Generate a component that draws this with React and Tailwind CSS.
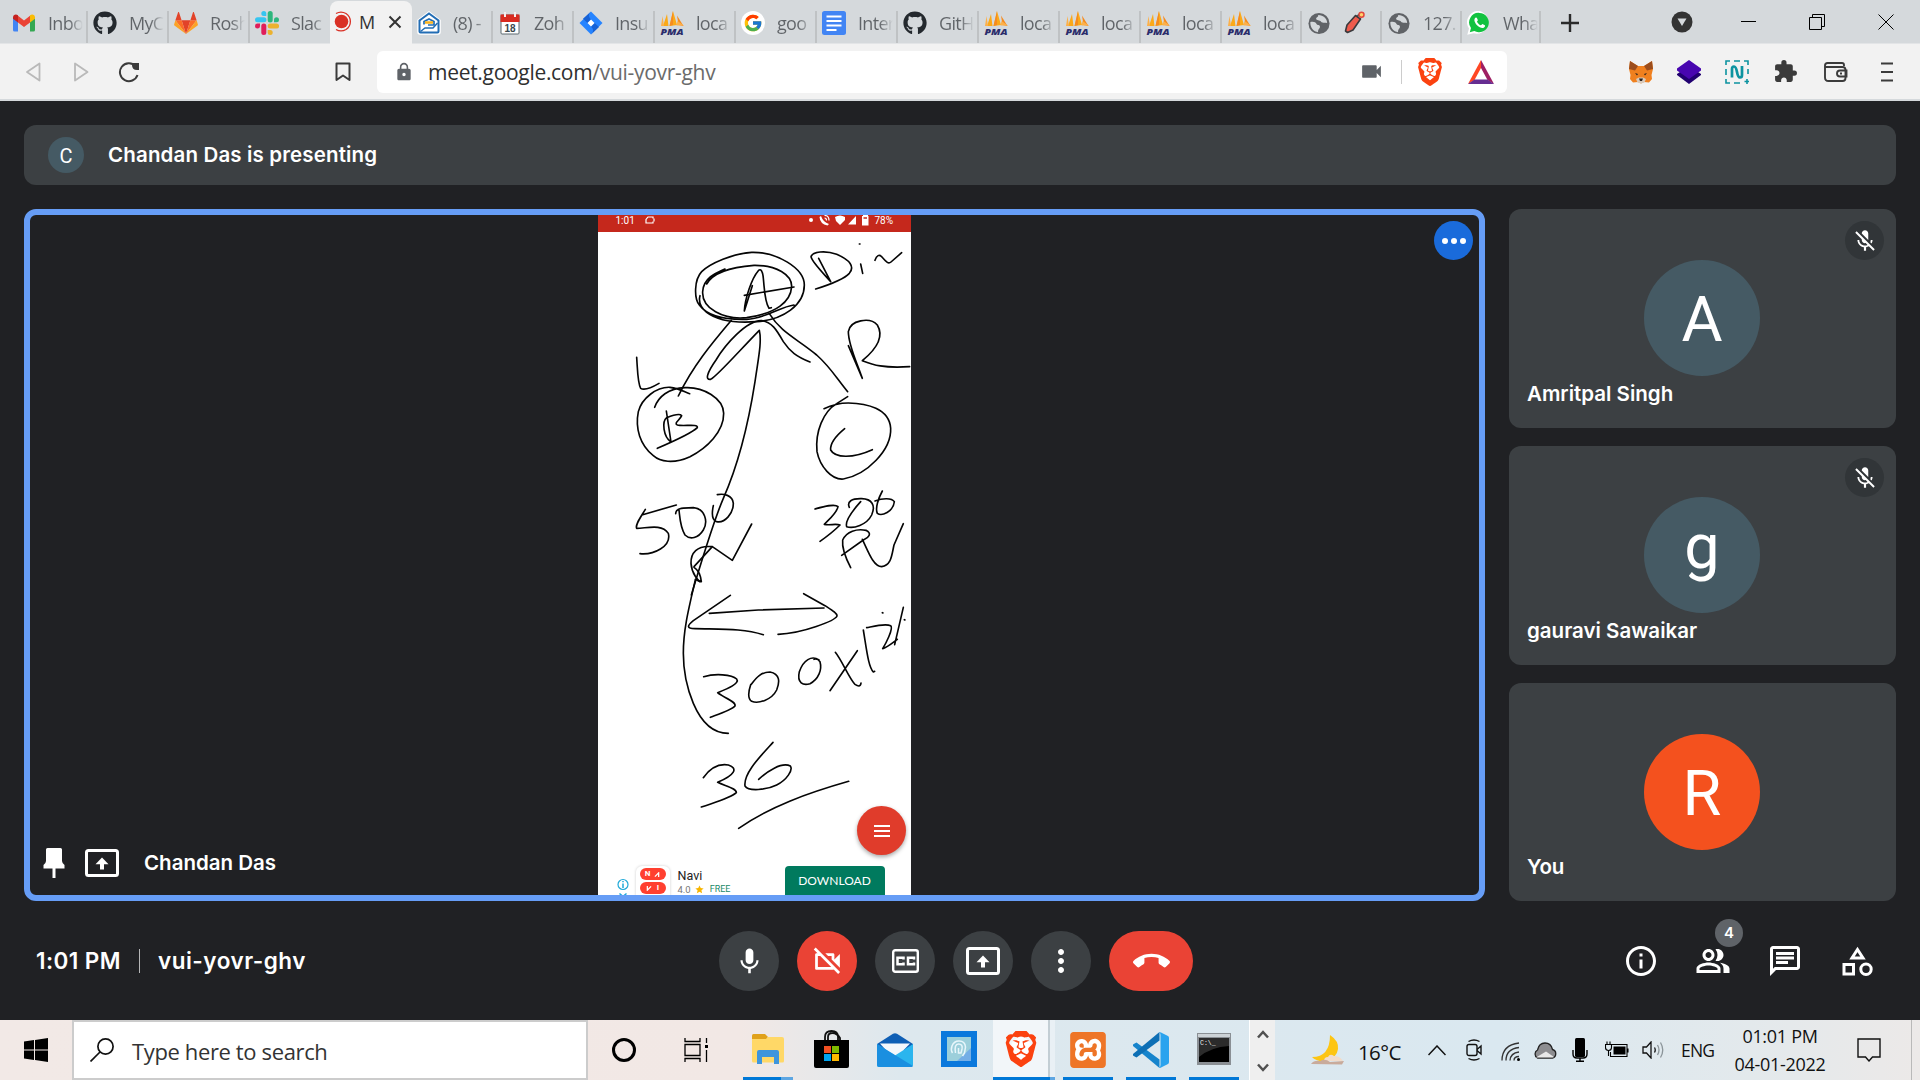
import React from "react";
import { FaGithub } from "react-icons/fa";
import { FcGoogle } from "react-icons/fc";
import { SiBrave, SiXampp } from "react-icons/si";
import {
  MdMic, MdMicOff, MdOutlineVideocamOff, MdMoreVert, MdCallEnd, MdInfoOutline,
  MdOutlinePeopleAlt, MdOutlineChat, MdVideocam, MdLock, MdExtension,
} from "react-icons/md";

/* ---------- favicons ---------- */
const Gmail = () => (
  <svg viewBox="0 0 24 24" className="h-6 w-6">
    <path d="M1 6v13q0 1.500 1.500 1.500H6V9.500z" fill="#4285f4" />
    <path d="M18 9.500v11h3.500Q23 20.500 23 19V6z" fill="#34a853" />
    <path d="M6 4.800v6.700l6 4.500 6-4.500V4.800L12 9.500z" fill="#ea4335" />
    <path d="M1 6.500c0-3 3-3.800 5-2.200v7.200l-5-3.700z" fill="#c5221f" />
    <path d="M23 6.500c0-3-3-3.800-5-2.200v7.200l5-3.700z" fill="#fbbc04" />
  </svg>
);
const Github = () => <FaGithub className="h-6 w-6 text-[#24292e]" />;
const Gitlab = () => (
  <svg viewBox="0 0 24 24" className="h-6 w-6">
    <path d="M12 23 16.400 9.300H7.600z" fill="#e24329" />
    <path d="M12 23 7.600 9.300H1.400z" fill="#fc6d26" />
    <path d="M1.400 9.300.1 13.400c-.1.400 0 .8.300 1L12 23z" fill="#fca326" />
    <path d="M1.400 9.300h6.200L5 1.200c-.1-.4-.7-.4-.9 0z" fill="#e24329" />
    <path d="M12 23 16.400 9.300h6.200z" fill="#fc6d26" />
    <path d="M22.600 9.300l1.300 4.100c.1.400 0 .8-.3 1L12 23z" fill="#fca326" />
    <path d="M22.600 9.300h-6.200L19 1.200c.1-.4.700-.4.9 0z" fill="#e24329" />
  </svg>
);
const Slack = () => (
  <svg viewBox="0 0 24 24" className="h-6 w-6">
    <g fill="#e01e5a"><path d="M5 15.200a2.500 2.500 0 1 1-2.500-2.600H5z" /><rect x="6.300" y="12.600" width="5" height="11.400" rx="2.500" /></g>
    <g fill="#36c5f0"><path d="M8.800 5a2.500 2.500 0 1 1 2.500-2.500V5z" /><rect x="0" y="6.300" width="11.400" height="5" rx="2.500" /></g>
    <g fill="#2eb67d"><path d="M19 8.800a2.500 2.500 0 1 1 2.500 2.500H19z" /><rect x="12.700" y="0" width="5" height="11.400" rx="2.500" /></g>
    <g fill="#ecb22e"><path d="M15.200 19a2.500 2.500 0 1 1-2.500 2.500V19z" /><rect x="12.700" y="12.600" width="11.400" height="5" rx="2.500" /></g>
  </svg>
);
const Recording = () => (
  <svg viewBox="0 0 18 24" className="h-6 w-[18px]">
    <circle cx="7.500" cy="11.500" r="6.800" fill="#d93025" />
    <path d="M2 3.500a10 10 0 0 1 10 0 9.500 9.500 0 0 1 0 16 10 10 0 0 1-10 0" fill="none" stroke="#d93025" strokeWidth="1.300" />
  </svg>
);
const ZohoMail = () => (
  <svg viewBox="0 0 24 24" className="h-6 w-6">
    <path d="M1.500 9.500 12 1.500l10.500 8V21a1.500 1.500 0 0 1-1.500 1.500H3A1.500 1.500 0 0 1 1.500 21z" fill="#fff" stroke="#fff" strokeWidth="2.500" />
    <path d="M2.500 9.500 12 2.500l9.500 7v11a1 1 0 0 1-1 1h-17a1 1 0 0 1-1-1z" fill="#fff" stroke="#226db4" strokeWidth="2" />
    <path d="m3.500 20.500 4.500-3.500h8l4.500-5" fill="none" stroke="#226db4" strokeWidth="1.500" />
    <path d="M7 13.500v-3L12 8l5 2.500v3.500h-6" fill="none" stroke="#226db4" strokeWidth="1.700" />
    <path d="M8 11.500h8" fill="none" stroke="#f9b21d" strokeWidth="2.500" />
  </svg>
);
const Calendar = () => (
  <svg viewBox="0 0 24 24" className="h-6 w-6">
    <rect x="3" y="4" width="18" height="19" rx="1" fill="#fff" stroke="#5d6b70" />
    <path d="M2.500 3.500h19V11h-19z" fill="#d92b20" />
    <path d="M7 1v5M17 1v5" stroke="#f6eeee" strokeWidth="2" />
    <text x="12" y="20.500" textAnchor="middle" fontSize="10" fontWeight="700" fontFamily="Liberation Sans" fill="#39474d">18</text>
  </svg>
);
const Jira = () => (
  <svg viewBox="0 0 24 24" className="h-6 w-6">
    <path d="M12 .5 23.500 12 12 23.500.5 12z" fill="#2684ff" />
    <path d="M12 .5q-4 4 0 8L8.500 12 4 7.800z" fill="#1662d6" />
    <path d="M12 23.500q4-4 0-8l3.500-3.500 4.500 4z" fill="#1662d6" />
    <path d="m12 8.500 3.500 3.500-3.500 3.500L8.500 12z" fill="#fff" />
  </svg>
);
const Pma = () => (
  <svg viewBox="0 0 24 24" className="h-6 w-6">
    <path d="M8.500 15 7 3 3 15zM9.500 15 13 0l4 14z" fill="#fba919" />
    <path d="M9.500 15 13 0v14z" fill="#f68b1f" />
    <path d="M17 4.500 23.500 15l-5-1z" fill="#f68b1f" />
    <path d="M2.500 5 1 15h3zM17.500 10l-1 4.500H24z" fill="#fcb04a" />
    <text x="12" y="23.500" textAnchor="middle" fontSize="9.300" fontWeight="800" fontStyle="italic" fontFamily="Open Sans" textLength="23" lengthAdjust="spacingAndGlyphs" fill="#2b2d6b">PMA</text>
  </svg>
);
const Google = () => (
  <span className="flex h-6 w-6 items-center justify-center rounded-full bg-white"><FcGoogle className="h-5 w-5" /></span>
);
const Docs = () => (
  <svg viewBox="0 0 24 24" className="h-6 w-6">
    <rect width="24" height="24" rx="2.500" fill="#4285f4" />
    <path d="M4.500 5.500h15M4.500 10h15M4.500 14.500h15M4.500 19h10" stroke="#fff" strokeWidth="2" />
  </svg>
);
const Globe = () => (
  <svg viewBox="0 0 24 24" className="h-[23px] w-6">
    <circle cx="12" cy="12" r="11" fill="#606367" />
    <path d="M3 10.500c3-1 5.500 0 6.500 2 .6 1.500 3.500.5 3.500 3 0 2-2 2-2 5.500C6.500 21 2.500 16 3 10.500zM11 3c1 2-2 2-2 4s4 1 5 3 4 1 6.500 1.500C20.500 7 17 3 11 3z" fill="#d5d9dc" />
  </svg>
);
const WhatsApp = () => (
  <svg viewBox="0 0 24 24" className="h-6 w-6">
    <path d="M12.500 0A11.300 11.300 0 0 0 2 17.500L.3 23.800l6.200-1.600A11.500 11.500 0 1 0 12.500 0z" fill="#fff" />
    <path d="M12.500 1.900A9.500 9.500 0 0 0 4 17l-1.200 4.300L7.300 20A9.700 9.700 0 1 0 12.500 1.900z" fill="#12c23f" />
    <path d="M8.800 6.500c-3 2-.5 6 1.500 8 2.500 2.500 6 3.500 7.500 1.200.8-1.500 0-1.700-2.300-2.700-.8 0-1 1.500-1.800 1.300-1.700-.6-3-2-3.700-3.500 0-.8 1-1 .8-1.800-.7-1.700-.8-2.700-2-2.500z" fill="#fff" />
  </svg>
);
const Extinguisher = () => (
  <svg viewBox="0 0 24 24" className="h-6 w-6">
    <path d="M4 14 12.500 4.500l5 3.500L10 19l-5.500 2.500L2.500 20z" fill="#ef5b4c" stroke="#3a3a3d" strokeWidth="1.600" strokeLinejoin="round" />
    <path d="m14.500 5 3-2.500" stroke="#3a3a3d" strokeWidth="1.800" />
    <circle cx="18.500" cy="3.700" r="2.500" fill="#ffd36b" stroke="#e2493d" strokeWidth="1.500" />
  </svg>
);

const tabs = [
  { w: "w-[81px]", icon: Gmail, label: "Inbo" },
  { w: "w-[81px]", icon: Github, label: "MyC" },
  { w: "w-[81px]", icon: Gitlab, label: "Rosh" },
  { w: "w-[80px]", icon: Slack, label: "Slac", last: true },
  { w: "w-[82px]", icon: Recording, label: "M", active: true },
  { w: "w-[81px]", icon: ZohoMail, label: "(8) -" },
  { w: "w-[81px]", icon: Calendar, label: "Zoh" },
  { w: "w-[81px]", icon: Jira, label: "Insu" },
  { w: "w-[81px]", icon: Pma, label: "loca" },
  { w: "w-[81px]", icon: Google, label: "goo" },
  { w: "w-[81px]", icon: Docs, label: "Inter" },
  { w: "w-[81px]", icon: Github, label: "GitH" },
  { w: "w-[81px]", icon: Pma, label: "loca" },
  { w: "w-[81px]", icon: Pma, label: "loca" },
  { w: "w-[81px]", icon: Pma, label: "loca" },
  { w: "w-[80px]", icon: Pma, label: "loca" },
  { w: "w-[80px]", icon: Globe, extra: Extinguisher },
  { w: "w-[80px]", icon: Globe, label: "127." },
  { w: "w-[79px]", icon: WhatsApp, label: "Wha" },
];

function Tab({ w, icon: Icon, extra: Extra, label, active, last }) {
  if (active)
    return (
      <div className={`${w} mt-px flex h-[43px] items-center rounded-t-lg bg-[#f2f2f2] pb-px pl-[4px]`}>
        <Icon />
        <span className="ml-[7px] w-[16px] text-[18px] tracking-[-0.700px] text-[#333]">{label}</span>
        <svg viewBox="0 0 14 14" className="ml-[13px] h-[14px] w-[14px]"><path d="m1.500 1.500 11 11m0-11-11 11" stroke="#333" strokeWidth="2" /></svg>
      </div>
    );
  return (
    <div className={`${w} flex h-[43px] items-center`}>
      <div className="flex flex-1 items-center overflow-hidden pl-[5px] pt-[3px]">
        <span className="shrink-0"><Icon /></span>
        {Extra ? (
          <span className="ml-[12px]"><Extra /></span>
        ) : (
          <span className="ml-[12px] w-[35px] overflow-hidden whitespace-pre bg-gradient-to-r from-[#606468] from-60% to-[#d5d9dc] bg-clip-text text-[18px] tracking-[-0.700px] text-transparent">{label}</span>
        )}
      </div>
      <div className={`mt-[11px] h-8 w-[2px] ${last ? "bg-transparent" : "bg-[#bfc2c4]"}`} />
    </div>
  );
}

function TabStrip() {
  return (
    <div className="flex h-11 border-b border-[#e3e5e7] bg-[#d5d9dc] pl-[7px]">
      {tabs.map((t, i) => <Tab key={i} {...t} />)}
      <div className="flex flex-1 items-center">
        <svg viewBox="0 0 18 18" className="ml-[20px] mt-[2px] h-[18px] w-[18px]"><path d="M9 0v18M0 9h18" stroke="#2b2b2b" strokeWidth="2.400" /></svg>
        <svg viewBox="0 0 22 22" className="ml-[92px] mt-px h-[22px] w-[22px]"><circle cx="11" cy="11" r="10.500" fill="#333" /><path d="M6.500 7.500h9L11 15z" fill="#d5d9dc" /></svg>
        <span className="ml-[48px] h-px w-[15px] bg-black" />
        <svg viewBox="0 0 16 16" className="ml-[53px] h-4 w-4" fill="none" stroke="#000"><path d="M.5 3.500h12v12H.5zM3.500 3.500v-3h12v12h-3" /></svg>
        <svg viewBox="0 0 16 16" className="ml-[53px] h-4 w-4" fill="none" stroke="#000"><path d="m.5.5 15 15m0-15-15 15" /></svg>
      </div>
    </div>
  );
}

/* Orange lion head with its face filled in white */
const BraveLion = ({ small }) => (
  <span className={`relative flex items-center justify-center ${small ? "h-7 w-6" : "h-9 w-[30px]"}`}>
    <span className={`absolute rounded-full bg-white ${small ? "h-[18px] w-[15px]" : "h-[24px] w-[20px]"}`} />
    <SiBrave className={`relative shrink-0 text-[#fb4210] ${small ? "h-7 w-7" : "h-9 w-9"}`} />
  </span>
);

function Toolbar() {
  return (
    <div className="flex h-[57px] items-center border-b-2 border-[#d5d9dc] bg-[#f2f2f2]">
      <svg viewBox="0 0 16 20" className="ml-[25px] h-5 w-4 shrink-0" fill="none" stroke="#b9b9b9" strokeWidth="1.800" strokeLinejoin="round"><path d="M14.500 1.500v17L2 10z" /></svg>
      <svg viewBox="0 0 16 20" className="ml-[32px] h-5 w-4 shrink-0" fill="none" stroke="#b9b9b9" strokeWidth="1.800" strokeLinejoin="round"><path d="M2 1.500v17L14.500 10z" /></svg>
      <svg viewBox="0 0 22 22" className="ml-[29px] h-[22px] w-[22px] shrink-0"><path d="M17.500 5A9 9 0 1 0 19.500 14" fill="none" stroke="#3b3b3b" strokeWidth="2" /><path d="M14 2h7v7h-2q-5 0-5-5z" fill="#3b3b3b" /></svg>
      <svg viewBox="0 0 16 20" className="ml-[195px] h-5 w-4 shrink-0" fill="none" stroke="#3b3b3b" strokeWidth="2"><path d="M1.500 1.500h13V18L8 13.500 1.500 18z" strokeLinejoin="round" /></svg>
      <div className="ml-[26px] flex h-[42px] w-[1130px] shrink-0 items-center rounded-md bg-white">
        <MdLock className="ml-[17px] h-5 w-5 text-[#5f6368]" />
        <span className="ml-[14px] mt-[2px] w-[600px] whitespace-nowrap text-[21px] tracking-[-0.300px] text-[#2f2f2f]">meet.google.com<span className="text-[#6b6b6b]">/vui-yovr-ghv</span></span>
        <MdVideocam className="ml-[331px] h-[25px] w-[25px] text-[#5f6368]" />
        <span className="ml-[17px] h-6 w-px bg-[#ccc]" />
        <span className="ml-[16px]"><BraveLion small /></span>
        <svg viewBox="0 0 26 24" className="ml-[26px] h-6 w-[26px]"><path d="M13 0 0 24l6.500-4L13 8z" fill="#ff4724" /><path d="m13 0 13 24-6.500-4L13 8z" fill="#9e1f63" /><path d="M0 24h26l-6.500-4.500h-13z" fill="#662d91" /></svg>
      </div>
      <svg viewBox="0 0 24 24" className="ml-[122px] h-6 w-6 shrink-0"><path d="m1 1 8 5h6l8-5 1 8-1.500 6 .5 4-3 3.500-5-.5-3 1.500L9 22l-5 .5L1 19l.5-4L0 9z" fill="#f0801f" /><path d="m1 1 8 5-3 4.500L0 9zM23 1l-8 5 3 4.500L24 9z" fill="#9c4d1c" /><path d="m7 19 3-1.500h4l3 1.500-1.500 3.500L12 23.500l-3.500-1z" fill="#d8c9bb" /><path d="M10 18.500h4L13 21h-2zM6 13l3 1-1 1.500zM18 13l-3 1 1 1.500z" fill="#2b2320" /></svg>
      <svg viewBox="0 0 24 24" className="ml-[24px] h-6 w-6 shrink-0"><path d="m0 14 12-8 12 8v1L12 24 0 15z" fill="#210070" /><path d="m12 0 12 8.500v2L12 19 0 10.500v-2z" fill="#4806b0" /></svg>
      <svg viewBox="0 0 24 24" className="ml-[24px] h-6 w-6 shrink-0" fill="none" stroke="#0c93a0" strokeWidth="1.600"><path d="M1 5V1h4M9 1h6M19 1h4v4M1 9v6M1 19v4h4M9 23h6M23 9v5M22 19v5M19.500 21.500h5" /><path d="M7 17.500V9q0-2.500 2-2.500T12 12t3 5.500 2-2.500V6" strokeWidth="2.700" /></svg>
      <MdExtension className="ml-[24px] h-[25px] w-[25px] shrink-0 text-[#3b3b3b]" />
      <svg viewBox="0 0 24 20" className="ml-[26px] h-5 w-6 shrink-0" fill="none" stroke="#3b3b3b" strokeWidth="1.900"><path d="M20 4V3q0-2-2-2H3.500Q1 1 1 3.500v12Q1 19 4.500 19h14q3 0 3-3V8q0-3-3-3H1.500" /><path d="M22.500 8.500H16a3 3 0 0 0 0 6h6.500zM16 11.500h2" /></svg>
      <svg viewBox="0 0 14 20" className="ml-[32px] h-5 w-[14px] shrink-0" stroke="#3b3b3b" strokeWidth="2"><path d="M1 1.500h12M1 10h12M1 18.500h12" /></svg>
    </div>
  );
}

/* ---------- meeting ---------- */
const PresentIcon = ({ className }) => (
  <svg viewBox="0 0 34 28" className={className} fill="none" stroke="currentColor">
    <rect x="1.500" y="1.500" width="31" height="25" rx="2" strokeWidth="3" />
    <path d="M17 20.500V12" strokeWidth="4" />
    <path d="M10.500 15.200 17 8.500l6.500 6.700z" fill="currentColor" stroke="none" />
  </svg>
);

const strokesTop = [
  "M350 237C365 210 400 188 492 181C560 180 606 210 605 245C602 290 560 325 470 338C400 345 335 310 338 260C340 220 375 205 405 192",
  "M330 272C325 290 330 305 350 322C380 345 430 355 500 350C580 345 643 300 643 240C643 190 560 140 485 142C430 145 360 175 335 200C312 225 312 280 328 300C350 330 400 345 470 343C530 340 570 305 612 300",
  "M487 242L463 318C465 280 485 220 505 197C512 190 518 197 520 220C524 260 524 290 537 310L544 308",
  "M463 271L612 246",
  "M686 160L722 230C700 205 665 170 663 155C668 140 705 135 740 148C780 165 795 185 778 205C760 225 715 240 677 252",
  "M812 177L818 205M808 117L810 117",
  "M855 166C860 150 868 148 875 155C890 172 895 178 903 171L935 143",
  "M775 422L817 520C800 470 775 420 775 380C780 345 840 335 862 360C880 390 868 425 817 467C850 480 880 490 959 485",
  "M424 346C370 410 310 480 265 573",
  "M538 326C575 385 620 400 680 450C720 485 740 520 773 560",
  "M660 471C620 455 600 440 580 410C560 375 545 350 515 347C470 345 405 420 378 465C350 505 345 525 362 523C380 515 450 435 508 376C516 410 505 460 495 530C470 690 440 790 400 880C370 950 340 1050 304 1170",
  "M140 457C143 500 143 535 152 550C165 558 190 545 207 535",
  "M194 607C205 575 235 550 285 548C340 545 400 580 401 625C402 680 350 730 300 755C250 778 210 770 190 752C150 720 135 670 145 620C155 580 200 545 240 547C270 550 285 562 299 566",
  "M229 618L243 711C220 695 215 650 230 638C250 630 270 625 275 632C270 645 250 655 262 660C280 665 325 655 322 668C305 685 260 705 202 730",
  "M773 575L740 596C700 620 675 680 681 740C690 785 725 825 760 822C830 810 905 735 902 670C898 610 830 595 775 594C745 594 725 600 702 611",
  "M764 671C735 695 720 715 722 735C735 760 790 760 847 734",
  "M259 900L158 929M166 913C150 940 135 960 140 970C170 970 215 955 235 985C245 1025 190 1050 150 1046",
  "M257 926C258 905 290 910 310 908C345 910 355 950 340 975C325 1000 300 1005 285 990C270 965 270 940 267 915",
  "M370 902C365 925 365 945 380 950C405 955 430 925 430 895C428 870 400 865 382 869",
  "M485 957L427 1066L367 1025L312 1085M367 1025C320 1020 302 1045 303 1075C305 1105 325 1130 334 1130C332 1110 325 1095 312 1087",
  "M675 912C700 905 735 895 744 905C740 925 715 945 703 958C720 962 735 955 750 960C730 980 710 995 690 1009",
  "M812 890C785 920 765 950 770 965C790 972 830 960 845 930C858 900 845 882 815 881C785 880 770 890 778 907",
  "M877 858C865 880 855 910 862 925C875 935 910 920 913 890C905 877 875 880 855 888",
  "M782 1088C765 1055 755 1030 758 1005C770 980 800 970 828 976C845 985 840 995 820 1005L755 1051M817 1003C835 1040 850 1085 875 1085C905 1080 905 1050 912 1020L940 956",
];
const strokesBottom = [
  "M316 0C295 90 280 150 280 220C280 300 315 460 415 460",
  "M316 -2L330 5M421 46L310 122C290 138 290 146 315 146C400 148 460 145 520 164M358 100L505 90L702 84M641 41L705 77C725 90 742 100 741 108C735 122 640 160 564 163",
  "M820 150C830 210 835 260 850 276L854 274M830 143C855 138 885 130 902 137C912 145 885 195 878 206C895 200 905 190 922 178M940 82L914 194M877 98L879 99M943 119L945 120",
  "M341 290C375 280 425 283 440 297C450 310 415 325 383 338C395 350 440 365 435 378C425 390 385 403 361 412",
  "M484 313C500 290 515 276 540 276C570 282 570 305 560 330C545 360 505 372 485 364C472 355 475 335 482 314",
  "M687 240C665 225 640 240 628 275C620 310 640 317 660 311C685 298 697 270 690 245C685 238 680 235 672 238",
  "M736 217C755 240 780 300 795 313C805 320 812 320 813 309M802 212L720 332",
  "M340 593C360 565 385 550 415 555C445 565 435 585 383 607C405 618 440 625 439 638C420 655 380 665 334 681",
  "M549 487C510 530 460 580 465 618C475 635 530 630 560 615C590 600 610 570 601 558C575 545 530 575 506 598",
  "M446 745C540 680 650 640 776 604",
];

function PhoneScreen() {
  return (
    <div className="relative flex h-full w-[313px] flex-col overflow-hidden bg-white font-[Roboto,sans-serif]">
      <div className="flex h-[17px] items-start bg-[#c5281c] text-[10px] leading-[11px] text-white">
        <span className="ml-[18px] w-[20px]">1:01</span>
        <svg viewBox="0 0 10 8" className="ml-[9px] mt-px h-2 w-[10px]" fill="none" stroke="#fff" strokeWidth="1.200"><path d="M8 5.500V7H1V3.500L3 1h5v1.500M9 2.500v3" /></svg>
        <svg viewBox="0 0 64 12" className="ml-auto mr-[4px] h-3 w-16" fill="#fff">
          <circle cx="4" cy="5" r="2" /><path d="M14 1q2 6 8 8l-1.500 1.500Q13 9 12.500 2zM28 2q5-3 10 0v3l-5 5-4-4z" /><path d="M17.500.5q4.500 0 4.500 5M17.500 3q2 0 2 2.500" fill="none" stroke="#fff" strokeWidth="1.200" /><path d="M41 9.500 49 1v8.500zM56 0h5v1h.500v9.500H55V1h1z" />
          <path d="M56.500 3h3.500" stroke="#c5281c" strokeWidth="1.500" />
        </svg>
        <span className="mr-[14px] w-[22px]">78%</span>
      </div>
      <div className="flex-1" />
      <svg viewBox="24 30 939 2040" className="absolute inset-0 h-full w-full" fill="none" stroke="#050505" strokeWidth="4.900" strokeLinecap="round" strokeLinejoin="round">
        {strokesTop.map((d, i) => <path key={i} d={d} />)}
        <g transform="translate(0 1125)">{strokesBottom.map((d, i) => <path key={i} d={d} />)}</g>
      </svg>
      <div className="absolute bottom-[40px] right-[4.500px] flex h-[49px] w-[49px] flex-col items-center justify-center gap-[3px] rounded-full bg-[#e03c2b] shadow-[0_2px_4px_rgba(0,0,0,0.35)]">
        <span className="h-[2px] w-4 bg-white" /><span className="h-[2px] w-4 bg-white" /><span className="h-[2px] w-4 bg-white" />
      </div>
      <div className="relative flex h-[29px] items-start">
        <svg viewBox="0 0 12 20" className="ml-[19px] mt-[12px] h-5 w-3 shrink-0" fill="none" stroke="#1fa9d8" strokeWidth="1.200"><circle cx="6" cy="6.500" r="5" /><path d="M6 5.500V10M6 3v1.200M2.500 15.500l7 6M9.500 15.500l-7 6" strokeWidth="1.500" /></svg>
        <div className="ml-[7px] flex h-[34px] w-[34px] shrink-0 flex-col items-center gap-[2px] rounded-md bg-white pt-[2px] shadow-[0_0_3px_rgba(0,0,0,0.2)]">
          <span className="flex h-[12px] w-[26px] items-center justify-center gap-[4px] rounded-full bg-[#ff4030] text-[8px] font-bold leading-none text-white"><span>N</span><svg viewBox="0 0 6 6" className="h-[5px] w-[6px]" fill="none" stroke="#fff" strokeWidth="1.500"><path d="M.5 5.500 5 1v5" /></svg></span>
          <span className="flex h-[12px] w-[26px] items-center justify-center gap-[5px] rounded-full bg-[#ff4030] text-[8px] font-bold leading-none text-white"><svg viewBox="0 0 6 6" className="h-[5px] w-[6px]" fill="none" stroke="#fff" strokeWidth="1.500"><path d="M1 0v5L5.500.5" /></svg><span>I</span></span>
        </div>
        <div className="ml-[8px] w-[107px] whitespace-nowrap">
          <div className="mt-[3px] text-[12.500px] leading-[14px] text-[#222]">Navi</div>
          <div className="mt-[1px] flex items-center text-[9.500px] leading-[11px] text-[#777]">4.0<svg viewBox="0 0 24 24" className="ml-[4px] h-[9px] w-[9px]"><path d="m12 1 3.300 7.300 7.700.8-5.800 5.200 1.700 7.700-6.900-4-6.900 4 1.700-7.700L1 9.100l7.700-.8z" fill="#f7b500" /></svg><span className="ml-[6px] text-[9px] text-[#1b8a68]">FREE</span></div>
        </div>
        <div className="flex h-[32px] w-[100px] justify-center rounded-sm bg-[#007a5e] pt-[7px] font-[Lato,sans-serif] text-[12px] leading-[15px] text-white">DOWNLOAD</div>
      </div>
    </div>
  );
}

function Stage() {
  return (
    <div className="relative flex h-[692px] w-[1461px] justify-center overflow-hidden rounded-xl border-[6px] border-[#669df6] pr-px">
      <PhoneScreen />
      <div className="absolute right-[6px] top-[6px] flex h-[39px] w-[39px] items-center justify-center gap-[3px] rounded-full bg-[#1a6bdb]">
        <i className="h-[6px] w-[6px] rounded-full bg-white" /><i className="h-[6px] w-[6px] rounded-full bg-white" /><i className="h-[6px] w-[6px] rounded-full bg-white" />
      </div>
      <div className="absolute bottom-4 left-[13px] flex h-[32px] items-center text-white">
        <svg viewBox="0 0 22 30" className="h-[30px] w-[22px]" fill="#fff"><path d="M3 1.500Q3 0 4.500 0h13Q19 0 19 1.500V13q0 2 2.500 4v3.500H.5V17Q3 15 3 13zM9.500 20h3v10h-3z" /></svg>
        <PresentIcon className="ml-[20px] h-7 w-[34px]" />
        <span className="ml-[25px] text-[20.500px] font-semibold">Chandan Das</span>
      </div>
    </div>
  );
}

function Tile({ letter, name, color = "bg-[#455a64]", muted, h, lift = "pt-[3px]", nameAt = "bottom-[18px]" }) {
  return (
    <div className={`relative flex ${h} w-[387px] items-center justify-center rounded-xl bg-[#3c4043] pb-px pr-px`}>
      <div className={`flex h-[116px] w-[116px] items-center justify-center rounded-full font-[Roboto,sans-serif] text-[63px] leading-none text-white ${lift} ${color}`}>{letter}</div>
      {muted && (
        <div className="absolute right-3 top-3 flex h-[39px] w-[39px] items-center justify-center rounded-full bg-[#313538]"><MdMicOff className="h-[26px] w-[26px] text-white" /></div>
      )}
      <span className={`absolute ${nameAt} left-[18px] text-[20.500px] font-semibold text-white ${muted ? "" : "tracking-[-0.200px]"}`}>{name}</span>
    </div>
  );
}

const Round = ({ children, className = "bg-[#3c4043] w-[60px]" }) => (
  <button className={`flex h-[60px] items-center justify-center rounded-[30px] text-white ${className}`}>{children}</button>
);

function Meeting() {
  return (
    <div className="flex h-[919px] flex-col bg-[#202124] px-6 pt-6 font-[Inter,sans-serif]">
      <div className="flex h-[60px] shrink-0 items-center rounded-xl bg-[#3c4043] pl-6">
        <span className="flex h-9 w-9 items-center justify-center rounded-full bg-[#455a64] pt-px font-[Roboto,sans-serif] text-[20px] text-white">C</span>
        <span className="ml-6 text-[20.500px] font-semibold tracking-[0.150px] text-white">Chandan Das is presenting</span>
      </div>
      <div className="mt-6 flex h-[692px] shrink-0 gap-6">
        <Stage />
        <div className="flex flex-col gap-[18px]">
          <Tile h="h-[219px]" letter="A" name="Amritpal Singh" lift="pt-[2px]" muted />
          <Tile h="h-[219px]" letter="g" name="gauravi Sawaikar" lift="pb-[18px]" muted />
          <Tile h="h-[218px]" letter="R" name="You" color="bg-[#f4511e]" nameAt="bottom-[18px]" />
        </div>
      </div>
      <div className="mt-[30px] flex h-[60px] items-center text-white">
        <div className="flex w-[695px] items-center pl-3">
          <span className="w-[84px] whitespace-nowrap text-[22.500px] font-semibold tracking-[0.400px]">1:01 PM</span>
          <span className="ml-[19px] h-6 w-px bg-[#b5b6b7]" />
          <span className="ml-[18px] text-[22.500px] font-semibold tracking-[0.500px]">vui-yovr-ghv</span>
        </div>
        <div className="flex gap-[18px]">
          <Round><MdMic className="h-[31px] w-[31px]" /></Round>
          <Round className="w-[60px] bg-[#ea4335]"><MdOutlineVideocamOff className="h-[33px] w-[33px]" /></Round>
          <Round>
            <svg viewBox="0 0 27 24" className="h-6 w-[27px]" fill="none" stroke="#fff"><rect x="1.200" y="1.200" width="24.600" height="21.600" rx="2" strokeWidth="2.400" /><path d="M11.500 10.500V8.700h-6v6.600h6v-1.800M22 10.500V8.700h-6v6.600h6v-1.800" strokeWidth="2.500" /></svg>
          </Round>
          <Round><PresentIcon className="h-7 w-[34px]" /></Round>
          <Round><MdMoreVert className="h-9 w-9" /></Round>
          <Round className="w-[84px] bg-[#ea4335]"><MdCallEnd className="h-[37px] w-[37px]" /></Round>
        </div>
        <div className="ml-auto flex items-center gap-9 pr-[21px]">
          <MdInfoOutline className="h-9 w-9" />
          <span className="relative">
            <MdOutlinePeopleAlt className="h-9 w-9" />
            <span className="absolute left-[20px] top-[-24px] flex h-7 w-7 items-center justify-center rounded-full bg-[#5f6368] text-[15px] font-semibold">4</span>
          </span>
          <MdOutlineChat className="h-9 w-9" />
          <svg viewBox="0 0 36 36" className="h-9 w-9" fill="none" stroke="#fff" strokeWidth="3"><path d="M18.500 6.500 24 15H13z" /><rect x="5" y="21.500" width="9.500" height="9.500" /><circle cx="27" cy="26.300" r="5.200" /></svg>
        </div>
      </div>
    </div>
  );
}

/* ---------- taskbar ---------- */
const appIcons = {
  explorer: (
    <svg viewBox="0 0 32 30" className="h-[30px] w-8"><path d="M0 1.500Q0 0 1.500 0H13l3 3-3 4H0z" fill="#e0a11b" /><path d="M0 5h14l2-2h14q2 0 2 2v22q0 1.500-1.500 1.500h-29Q0 28.500 0 27z" fill="#ffd867" /><path d="M5 30V18q0-2 2-2h18q2 0 2 2v12h-5v-7H10v7z" fill="#3e95dd" /></svg>
  ),
  store: (
    <svg viewBox="0 0 35 38" className="h-[38px] w-[35px]"><path d="M11 10V7q0-6 6.500-6T24 7v3M14 10V7q0-4 4.500-4T26 8v2" fill="none" stroke="#111" strokeWidth="1.800" /><path d="M0 10h35v26q0 2-2 2H2q-2 0-2-2z" fill="#000" /><path d="M10 16h7v7h-7z" fill="#f25022" /><path d="M18 16h7v7h-7z" fill="#7fba00" /><path d="M10 24h7v7h-7z" fill="#00a4ef" /><path d="M18 24h7v7h-7z" fill="#ffb900" /></svg>
  ),
  mail: (
    <svg viewBox="0 0 36 34" className="h-[34px] w-9"><path d="M0 11 16 .8q2-1.200 4 0L36 11v6H0z" fill="#0f5fb5" /><path d="M3 10.500h30L20 24H15z" fill="#f4f7fb" /><path d="M0 11l18 11.500L36 11v21q0 2-2 2H2q-2 0-2-2z" fill="#2bb5ee" /><path d="M0 11l36 22q-1 1-2 1H2q-2 0-2-2z" fill="#1a8fe0" /></svg>
  ),
  head: (
    <svg viewBox="0 0 36 36" className="h-9 w-9"><path d="M0 0h36v36H0z" fill="#0a78dc" /><path d="M6 6h24v24H6z" fill="#9ccfdb" /><path d="m16 30 14-13v13z" fill="#74aee6" /><path d="M11.500 22q-2-3-.5-7 2-5 7-5 6 0 6.500 6l-1 6-2 3M14.500 22q-1.500-9 3-9t3.500 5l-1 4h-2.500v-5" fill="none" stroke="#e8f6fb" strokeWidth="1.500" /></svg>
  ),
  xampp: (
    <span className="relative flex h-9 w-9 items-center justify-center">
      <span className="absolute h-8 w-8 bg-white" />
      <SiXampp className="relative h-9 w-9 text-[#ee7527]" />
    </span>
  ),
  vscode: (
    <svg viewBox="0 0 36 36" className="h-9 w-9"><path d="M3.500 10.500 26.500 27.500V36L0 14q-.500-1 .3-1.700z" fill="#1684cc" /><path d="M3.500 25.500 26.500 8.500V0L0 22q-.500 1 .3 1.700z" fill="#0d6fb5" /><path d="M26 0q1 0 2 .500l7 3.500q1 .5 1 2v24q0 1.500-1 2l-7 3.500q-1 .500-2 .500 1.500-1 1.500-3V3q0-2-1.500-3z" fill="#2aa3ee" /></svg>
  ),
  cmd: (
    <svg viewBox="0 0 34 32" className="h-8 w-[34px]"><path d="M0 0h34v32H0z" fill="#8a8f94" /><path d="M1 1h32v3H1z" fill="#ccd2d6" /><path d="M2 5h30v24H2z" fill="#000" /><path d="M2 5h30v8Q14 14 2 24z" fill="#2b2b2b" /><text x="3" y="11.500" fontSize="6.500" fontFamily="Liberation Mono" fill="#eee">C:\_</text></svg>
  ),
};

const TaskApp = ({ icon, w, ml, bar }) => (
  <div className={`flex h-full flex-col items-center ${w} ${ml}`}>
    <div className="flex flex-1 items-center pt-[3px]">{icon}</div>
    <div className={`h-[3px] w-full ${bar ? "bg-[#0078d7]" : "bg-transparent"}`} />
  </div>
);

function Taskbar() {
  return (
    <div className="flex h-[60px] items-center bg-[linear-gradient(90deg,#f2e9e6_0px,#f2e8e5_740px,#dde8ee_900px,#dae8f0_1500px,#e3e9ec_1750px,#ece9e8_1920px)] text-[#111]">
      <svg viewBox="0 0 24 24" className="ml-6 h-6 w-6 shrink-0"><path d="M0 3.400 10 2v9.500H0zM11 1.900 24 0v11.500H11zM0 12.500h10V22L0 20.600zM11 12.500h13V24l-13-1.900z" fill="#000" /></svg>
      <div className="ml-[24px] flex h-[60px] w-[516px] shrink-0 items-center border-2 border-[#ccc] bg-white">
        <svg viewBox="0 0 24 24" className="ml-[16px] h-6 w-6" fill="none" stroke="#111" strokeWidth="1.700"><circle cx="15.500" cy="8.500" r="7.600" /><path d="M10 14 .5 23.500" /></svg>
        <span className="ml-[18px] mt-[3px] whitespace-nowrap text-[22px] tracking-[-0.370px] text-[#333]">Type here to search</span>
      </div>
      <span className="ml-[24px] h-6 w-6 shrink-0 rounded-full border-[3px] border-black" />
      <svg viewBox="0 0 25 24" className="ml-[48px] h-6 w-[25px] shrink-0" fill="none" stroke="#000" strokeWidth="1.300"><path d="M1 0v3.500h15V0M1 24v-3.500h15V24M1 6.500h15v11H1zM22.500 0v5M22.500 12v12" /><path d="M21 7h3v3h-3z" fill="#000" stroke="none" /></svg>
      <div className="flex h-full flex-1">
        <div className="ml-[34px] flex h-full w-[50px] flex-col items-center">
          <div className="flex flex-1 items-center pt-px">{appIcons.explorer}</div>
          <div className="h-[3px] w-full bg-[linear-gradient(90deg,#0078d7_38px,#5ea6e2_38px)]" />
        </div>
        <TaskApp w="w-[50px]" ml="ml-[13px]" icon={<span className="-mt-[3px]">{appIcons.store}</span>} />
        <TaskApp w="w-[50px]" ml="ml-[14px]" icon={appIcons.mail} />
        <TaskApp w="w-[50px]" ml="ml-[14px]" icon={<span className="-mt-[3px]">{appIcons.head}</span>} />
        <div className="ml-[9px] flex h-full w-[62px] flex-col">
          <div className="flex flex-1">
            <div className="flex w-[57px] items-center justify-center border-r-2 border-[#c3ced4] bg-[#f2f6f9]"><BraveLion /></div>
            <div className="flex-1 bg-[#e9f0f5]" />
          </div>
          <div className="h-[3px] bg-[linear-gradient(90deg,#0078d7_57px,#5ea6e2_57px)]" />
        </div>
        <TaskApp w="w-[50px]" ml="ml-[8px]" bar icon={<span className="-mt-px">{appIcons.xampp}</span>} />
        <TaskApp w="w-[50px]" ml="ml-[13px]" bar icon={<span className="-mt-px">{appIcons.vscode}</span>} />
        <TaskApp w="w-[50px]" ml="ml-[13px]" bar icon={<span className="-mt-[3px]">{appIcons.cmd}</span>} />
        <div className="ml-[10px] flex h-full w-[26px] flex-col items-center justify-between border-l border-white bg-[#efefef] pb-[8px] pt-[10px]">
          <svg viewBox="0 0 12 9" className="h-[9px] w-3" fill="none" stroke="#505050" strokeWidth="2.500"><path d="m1 7.500 5-5.500 5 5.500" /></svg>
          <svg viewBox="0 0 12 9" className="h-[9px] w-3" fill="none" stroke="#505050" strokeWidth="2.500"><path d="m1 1.500 5 5.500 5-5.500" /></svg>
        </div>
        <div className="flex flex-1 items-center">
          <svg viewBox="0 0 36 30" className="ml-[35px] h-[30px] w-9 shrink-0"><path d="M20 0q9 6 8 14T17 26Q6 27 2 22q18 0 18-22z" fill="#fdc513" /><path d="M14 26q0-4 4-4 2-4 6-1 6 0 9 5z" fill="#f1dccb" /><path d="M1 29q3-4 9-3 5-3 10 1l14-1-2 3.500z" fill="#c9ab9b" /></svg>
          <span className="ml-[12px] mt-[4px] w-[44px] whitespace-nowrap text-[20.500px] tracking-[-0.600px]">16°C</span>
          <svg viewBox="0 0 18 11" className="ml-[26px] h-[11px] w-[18px] shrink-0" fill="none" stroke="#111" strokeWidth="1.500"><path d="m.5 10 8.500-9 8.500 9" /></svg>
          <svg viewBox="0 0 16 22" className="ml-[20px] h-[22px] w-4 shrink-0" fill="none" stroke="#111" strokeWidth="1.400"><rect x="1" y="5.500" width="10" height="11" rx="2" /><path d="M11 10.500 15 7v8l-4-3.500M2.500 2.500q5.500-3 11 0M2.500 19.500q5.500 3 11 0" /></svg>
          <svg viewBox="0 0 19 19" className="ml-[19px] mt-[3px] h-[19px] w-[19px] shrink-0" fill="none" stroke="#333" strokeWidth="1.300"><path d="M1 18.500Q1 3 18 1M5 18.500Q5 7 18 5.500M9 18.500Q9.500 11 18 10M13 18.500q0-4 5-4" /><circle cx="17.500" cy="17.500" r="1.500" fill="#000" stroke="none" /></svg>
          <svg viewBox="0 0 24 17" className="ml-[13px] h-[17px] w-6 shrink-0"><path d="M4.500 16a4.500 4.500 0 0 1 0-8Q6 1 12 1t7.500 6.500a4.400 4.400 0 0 1 0 8.500z" fill="#8d8d90" stroke="#222" strokeWidth="1.300" /><path d="M3 15.500 13 9.500l8 5.500q-1 .5-2 .5H5z" fill="#e8e8e8" /></svg>
          <svg viewBox="0 0 16 24" className="ml-[15px] h-6 w-4 shrink-0"><rect x="3" y="0" width="10" height="19" rx="1.500" fill="#000" /><path d="M1 12v4q0 4 4 4h6q4 0 4-4v-4M8 20v3M4 23.200h8" fill="none" stroke="#000" strokeWidth="1.400" /></svg>
          <svg viewBox="0 0 24 18" className="ml-[17px] h-[18px] w-6 shrink-0" fill="none" stroke="#000" strokeWidth="1.100"><path d="M7 3.500h15v12H5.500V11M23 7.500v4" /><path d="M8.500 5.500h12v8h-12z" fill="#000" stroke="none" /><path d="M.5 3.500h6v3q0 3-3 3t-3-3zM2 .5v3M5 .5v3M3.500 9.500v5.500" /></svg>
          <svg viewBox="0 0 23 18" className="ml-[13px] h-[18px] w-[23px] shrink-0" fill="none" stroke="#111" strokeWidth="1.300"><path d="M1 6v6h3.500l4.500 5V1L4.500 6zM12.500 6.500q1.500 2.500 0 5" /><path d="M15.500 4q3 5 0 10M18.500 1.500q4.500 7.500 0 15" stroke="#8b9499" /></svg>
          <span className="ml-[16px] w-[34px] whitespace-nowrap text-[17.500px] tracking-[-0.800px]">ENG</span>
          <div className="ml-[16px] w-[98px] whitespace-nowrap text-center text-[18px] leading-[28px] tracking-[-0.300px]"><div>01:01 PM</div><div>04-01-2022</div></div>
          <svg viewBox="0 0 24 24" className="ml-[28px] h-6 w-6 shrink-0" fill="none" stroke="#111" strokeWidth="1.400"><path d="M1 1h22v18h-7.500L12 23l-3.500-4H1z" /></svg>
          <span className="ml-[30px] h-[60px] w-px shrink-0 bg-[#b9b9b9]" />
        </div>
      </div>
    </div>
  );
}

export default function App() {
  return (
    <div className="h-[1080px] w-[1920px] overflow-hidden font-['Open_Sans',sans-serif]">
      <TabStrip />
      <Toolbar />
      <Meeting />
      <Taskbar />
    </div>
  );
}
